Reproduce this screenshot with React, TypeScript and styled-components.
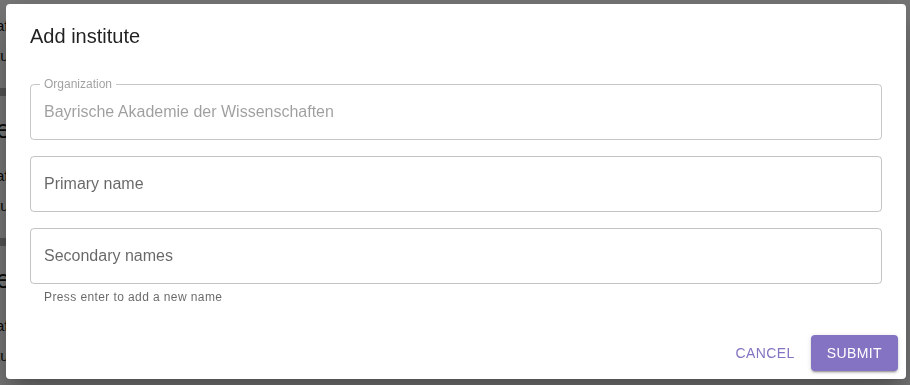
import React from "react";
import styled, { createGlobalStyle } from "styled-components";

const Global = createGlobalStyle`
  html, body { margin: 0; padding: 0; background: #efefef; }
  body { font-family: "Liberation Sans", Arial, sans-serif; overflow: hidden; }
  * { box-sizing: border-box; }
`;

const Page = styled.div`
  width: 910px;
  height: 385px;
  overflow: hidden;
  padding-top: 10px;
  margin-left: -4px;
  color: #111;
`;

const Section = styled.section`
  display: flex;
  flex-direction: column;
`;

const Heading = styled.div`
  height: 64px;
  display: flex;
  align-items: center;
  font-size: 26px;
  padding-top: 2px;
`;

const Line = styled.div`
  height: 30px;
  display: flex;
  align-items: center;
  font-size: 15px;
`;

const Divider = styled.div`
  height: 8px;
  margin-top: 18px;
  background: #a8a8a8;
  width: 930px;
`;

const Backdrop = styled.div`
  position: fixed;
  inset: 0;
  background: rgba(0, 0, 0, 0.5);
  display: flex;
  align-items: flex-start;
  padding: 4px 0 0 6px;
`;

const Dialog = styled.div`
  width: 900px;
  background: #fff;
  border-radius: 4px;
  box-shadow: 0 11px 15px -7px rgba(0,0,0,0.2), 0 24px 38px 3px rgba(0,0,0,0.14), 0 9px 46px 8px rgba(0,0,0,0.12);
  display: flex;
  flex-direction: column;
`;

const Title = styled.h2`
  margin: 0;
  padding: 16px 24px;
  font-size: 20px;
  line-height: 32px;
  font-weight: 400;
  color: rgba(0, 0, 0, 0.87);
`;

const Content = styled.div`
  padding: 16px 24px 20px;
  display: flex;
  flex-direction: column;
  gap: 16px;
`;

const FieldWrap = styled.div`
  display: flex;
  flex-direction: column;
`;

const Box = styled.div<{ $disabled?: boolean }>`
  position: relative;
  height: 56px;
  border: 1px solid ${(p) => (p.$disabled ? "rgba(0,0,0,0.22)" : "rgba(0,0,0,0.23)")};
  border-radius: 4px;
  padding: 0 13px;
  display: flex;
  align-items: center;
  font-size: 16px;
  color: ${(p) => (p.$disabled ? "rgba(0,0,0,0.38)" : "rgba(0,0,0,0.6)")};
`;

const Floating = styled.span`
  position: absolute;
  top: -8px;
  left: 9px;
  padding: 0 4px;
  background: #fff;
  font-size: 12px;
  line-height: 14px;
  color: rgba(0, 0, 0, 0.38);
`;

const Helper = styled.div`
  margin: 3px 14px 0;
  font-size: 12px;
  line-height: 20px;
  letter-spacing: 0.4px;
  color: rgba(0, 0, 0, 0.6);
`;

const Actions = styled.div`
  padding: 8px;
  display: flex;
  justify-content: flex-end;
  align-items: center;
  gap: 8px;
`;

const Button = styled.button<{ $contained?: boolean }>`
  font-family: "Liberation Sans", Arial, sans-serif;
  font-size: 14px;
  letter-spacing: 0.4px;
  text-transform: uppercase;
  height: 36px;
  border: none;
  border-radius: 4px;
  cursor: pointer;
  padding: ${(p) => (p.$contained ? "6px 16px" : "6px 8px")};
  background: ${(p) => (p.$contained ? "#8472c2" : "transparent")};
  color: ${(p) => (p.$contained ? "#fff" : "#8472c2")};
  box-shadow: ${(p) =>
    p.$contained
      ? "0 3px 1px -2px rgba(0,0,0,0.2), 0 2px 2px 0 rgba(0,0,0,0.14), 0 1px 5px 0 rgba(0,0,0,0.12)"
      : "none"};
`;

const blocks = [0, 1, 2];

export default function App() {
  return (
    <>
      <Global />
      <Page>
        {blocks.map((b) => (
          <Section key={b}>
            {b > 0 && <Heading>ed Institute</Heading>}
            <Line>afternoon status</Line>
            <Line>tu Institute</Line>
            <Divider />
          </Section>
        ))}
      </Page>
      <Backdrop>
        <Dialog role="dialog">
          <Title>Add institute</Title>
          <Content>
            <Box $disabled>
              <Floating>Organization</Floating>
              Bayrische Akademie der Wissenschaften
            </Box>
            <Box>Primary name</Box>
            <FieldWrap>
              <Box>Secondary names</Box>
              <Helper>Press enter to add a new name</Helper>
            </FieldWrap>
          </Content>
          <Actions>
            <Button>Cancel</Button>
            <Button $contained>Submit</Button>
          </Actions>
        </Dialog>
      </Backdrop>
    </>
  );
}
